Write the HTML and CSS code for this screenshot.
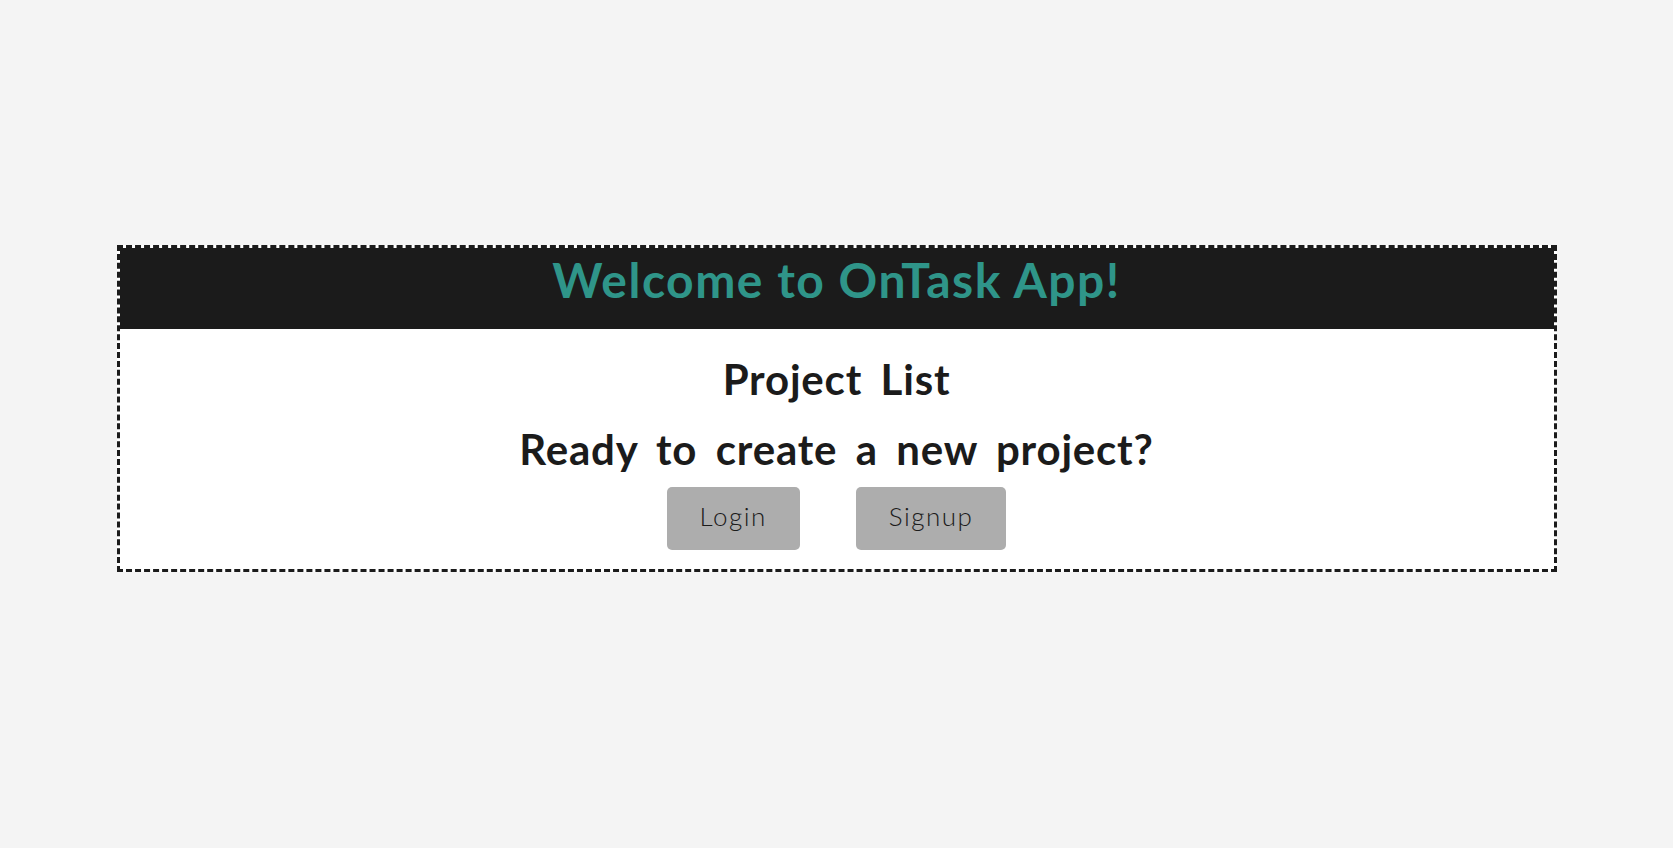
FILE: index.html
```html
<!DOCTYPE html>
<html lang="en">
<head>
<meta charset="utf-8">
<title>OnTask App</title>
<link rel="stylesheet" href="styles.css">
</head>
<body>
  <main class="card">
    <header class="card-header">
      <h1 class="title">Welcome to OnTask App!</h1>
    </header>
    <section class="card-body">
      <h2 class="heading heading-first">Project List</h2>
      <h2 class="heading heading-second">Ready to create a new project?</h2>
      <div class="actions">
        <button class="btn" type="button">Login</button>
        <button class="btn" type="button">Signup</button>
      </div>
    </section>
  </main>
</body>
</html>
```

FILE: styles.css
```css
html, body {
  margin: 0;
  padding: 0;
}

body {
  background: #f4f4f4;
  font-family: Lato, "Noto Sans", sans-serif;
  color: #1b1b1b;
}

.card {
  box-sizing: border-box;
  width: 1440px;
  margin: 245px auto 0 auto;
  background: #ffffff;
  border: 3px dashed #1b1b1b;
}

.card-header {
  height: 81px;
  background: #1b1b1b;
  display: flex;
  justify-content: center;
  box-sizing: border-box;
  padding-bottom: 18px;
}

.title {
  margin: 0;
  font-size: 48px;
  line-height: 63px;
  font-weight: 700;
  color: #2f9589;
  letter-spacing: 1.5px;
}

.card-body {
  display: flex;
  flex-direction: column;
  align-items: center;
  padding: 25px 0 19px 0;
}

.heading {
  margin: 0;
  font-size: 42px;
  line-height: 50px;
  font-weight: 700;
  color: #1b1b1b;
  letter-spacing: 0.8px;
  word-spacing: 7.5px;
}

.heading-second {
  margin-top: 20px;
}

.actions {
  display: flex;
  gap: 56px;
  margin-top: 13px;
}

.btn {
  height: 63px;
  box-sizing: border-box;
  padding: 0 33px 5px 33px;
  border: none;
  border-radius: 5px;
  background: #adadad;
  color: #1b1b1b;
  font-family: Lato, "Noto Sans", sans-serif;
  font-size: 26px;
  font-weight: 300;
  line-height: 58px;
  letter-spacing: 1.5px;
  cursor: pointer;
}
```
